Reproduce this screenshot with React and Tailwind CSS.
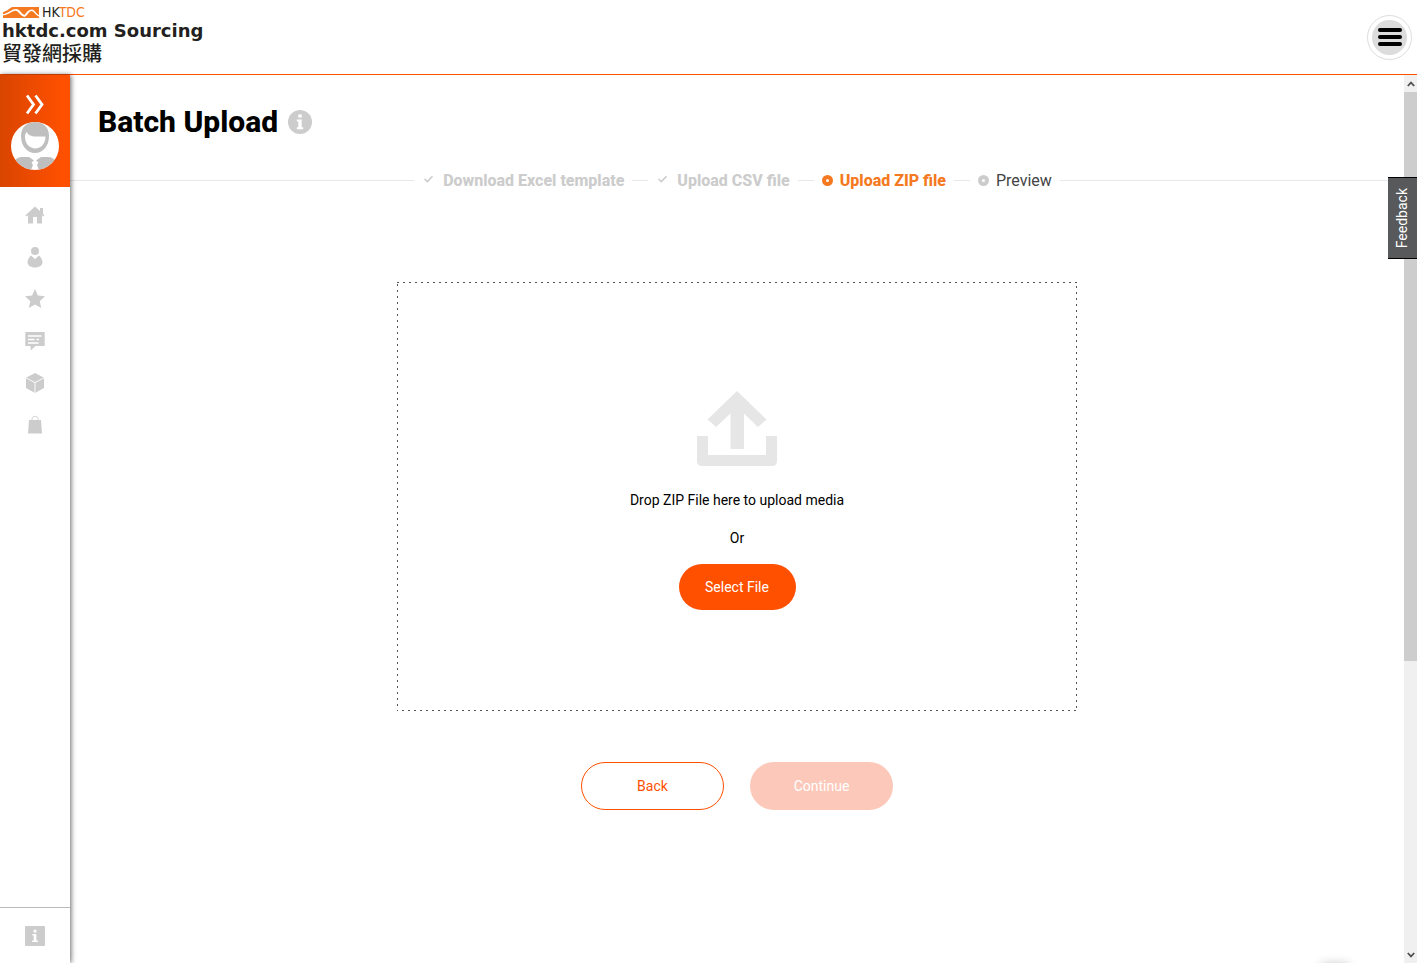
import clsx from 'clsx';

const navItems = [
    {
        label: 'Home',
        icon: (
            <path d="M10 1.5 0.5 10.2 1.6 11.4 3 10.3V18.5H8V12H12V18.5H17V10.3L18.4 11.4 19.5 10.2 18 8.8V3H15V6Z" />
        ),
    },
    {
        label: 'Profile',
        icon: (
            <>
                <circle cx="10" cy="4" r="4" />
                <path d="M6.2 8.6 10 12.2 13.8 8.6C16.3 10.5 17.7 13.5 17.5 16 16.8 19 13.5 20.5 10 20.5S3.2 19 2.5 16C2.3 13.5 3.7 10.5 6.2 8.6Z" />
            </>
        ),
    },
    {
        label: 'Favourites',
        icon: <path d="M10 0 12.9 6.6 20 7.3 14.7 12.2 16.2 19 10 15.5 3.8 19 5.3 12.2 0 7.3 7.1 6.6Z" />,
    },
    {
        label: 'Messages',
        icon: (
            <>
                <path d="M0.3 1H19.7V15H10.5L5.6 19.6V15H0.3Z" />
                <path d="M3 5H16.5M3 8.5H9.5M11.5 8.5H14M3 12H13.5" stroke="#fff" strokeWidth="1.4" />
            </>
        ),
    },
    {
        label: 'Products',
        icon: (
            <>
                <path d="M10 0 19 4.7V15L10 20 1 15V4.7Z" />
                <path d="M1.2 5 10 9.6 18.8 5M10 9.6V20" fill="none" stroke="#fff" strokeWidth="0.9" />
            </>
        ),
    },
    {
        label: 'Orders',
        icon: (
            <>
                <path d="M4 5H16L17 18.5H3Z" />
                <path d="M7 6V4C7 0.4 13 0.4 13 4V6" fill="none" stroke="#ccc" strokeWidth="0.9" />
            </>
        ),
    },
];

const steps = [
    { label: 'Download Excel template', state: 'done' },
    { label: 'Upload CSV file', state: 'done' },
    { label: 'Upload ZIP file', state: 'active' },
    { label: 'Preview', state: 'next' },
];

function Header() {
    return (
        <header className="flex shrink-0 items-center justify-between border-b border-[#ff5000] pr-[5px]">
            <a href="#" className="flex h-[74px] flex-col pt-1 pl-[2px] text-[#231f20]">
                <span className="flex h-4 items-center">
                    <svg viewBox="0 0 38 12" className="h-3 w-[38px]" aria-hidden="true">
                        <path d="M1 1H37V12H1Z" fill="#f47920" />
                        <path d="M0 0H12C8 1.5 6 5 0 6.5Z" fill="#fff" />
                        <path
                            d="M0 8.3C6 8 9 3.2 14 3 18 3.2 19 7.5 22.5 9 25 5.5 27 3.2 30 3.4 33 4 34 8 38 9.5V11C33.5 9.5 32 5.2 29.6 5 27 5.2 25.5 9.5 22.5 11 18 9.6 16.5 5 13.5 4.8 9.5 5 6 9.6 0 9.6Z"
                            fill="#fff"
                        />
                    </svg>
                    <span className="pl-[2px] font-['Liberation_Sans_Narrow','DejaVu_Sans_Condensed',sans-serif] text-[14px] leading-4">
                        HK<span className="text-[#f47920]">TDC</span>
                    </span>
                </span>
                <span className="font-['DejaVu_Sans',sans-serif] text-[18px] leading-[22px] font-bold">
                    hktdc.com Sourcing
                </span>
                <span className="font-['Noto_Sans_CJK_TC',sans-serif] text-[20px] leading-[22px] font-medium">
                    貿發網採購
                </span>
            </a>
            <button
                type="button"
                aria-label="Menu"
                className="flex size-[45px] items-center justify-center rounded-full border border-[#ddd]"
            >
                <span className="flex size-[35px] flex-col items-center justify-center gap-[3px] rounded-full bg-[#dcdcdc]">
                    <span className="h-1 w-6 rounded-full bg-black" />
                    <span className="h-1 w-6 rounded-full bg-black" />
                    <span className="h-1 w-6 rounded-full bg-black" />
                </span>
            </button>
        </header>
    );
}

function Sidebar() {
    return (
        <aside className="z-10 flex w-[70px] shrink-0 flex-col bg-white shadow-[1px_0_5px_rgba(0,0,0,0.6)]">
            <div className="flex flex-col items-center gap-[7px] bg-linear-to-r from-[#d94500] to-[#ff5000] to-90% pt-[19px] pb-[17px]">
                <button type="button" aria-label="Expand menu">
                    <svg viewBox="0 0 20 21" className="h-[21px] w-5" fill="none" stroke="#fff" strokeWidth="2.8">
                        <path d="M2 1.5 8.5 10.5 2 19.5M10.5 1.5 17 10.5 10.5 19.5" />
                    </svg>
                </button>
                <a href="#" aria-label="Account" className="size-12 overflow-hidden rounded-full bg-white">
                    <svg viewBox="0 0 48 48" className="size-12">
                        <path
                            d="M24 0C32 0 38 5 38 14 38 24 32 31 24 31S10 24 10 14C10 5 16 0 24 0Z"
                            fill="#bfbfbf"
                        />
                        <path
                            d="M15.5 10C17.5 13 20 14.5 25 14.5H34.5C34.5 21.5 30 26.5 24.5 26.5 18.5 26.5 14 21.5 14 15 14 13 14.6 11.5 15.5 10Z"
                            fill="#fff"
                        />
                        <path
                            d="M3 41C4 36 8 35 12 35H18L23 38.5 20.5 40.5 22 43 20 48H3ZM45 41C44 36 40 35 36 35H30L25 38.5 27.5 40.5 26 43 28 48H45Z"
                            fill="#bfbfbf"
                        />
                    </svg>
                </a>
            </div>
            <nav className="flex flex-1 flex-col pt-[7px]">
                {navItems.map((item) => (
                    <a
                        key={item.label}
                        href="#"
                        aria-label={item.label}
                        className="flex h-[42px] items-center justify-center"
                    >
                        <svg viewBox="0 0 20 20" className="size-5 overflow-visible" fill="#ccc">
                            {item.icon}
                        </svg>
                    </a>
                ))}
            </nav>
            <a href="#" aria-label="Help" className="flex h-14 items-center justify-center border-t border-[#bbb]">
                <svg viewBox="0 0 20 20" className="size-5">
                    <rect width="20" height="20" rx="1" fill="#ccc" />
                    <path d="M8.6 3.8H11.4V6.4H8.6ZM7.4 8H11.4V14.4H12.8V16H7.2V14.4H8.7V9.6H7.4Z" fill="#fff" />
                </svg>
            </a>
        </aside>
    );
}

function StepIcon({ state }) {
    if (state === 'done') {
        return (
            <svg viewBox="0 0 14 14" className="mr-[7px] w-[14px]" fill="none" stroke="#ccc" strokeWidth="1.6">
                <path d="M2.5 5 5.4 7.6 10.5 2.2" />
            </svg>
        );
    }
    return (
        <span
            className={clsx(
                'mr-[7px] size-[11px] rounded-full border-4',
                state === 'active' ? 'border-[#f47920]' : 'border-[#ccc]',
            )}
        />
    );
}

function Steps() {
    return (
        <ol className="mt-[26px] flex items-center text-[16px] leading-[25px] before:h-px before:flex-1 before:bg-[#e8e8e8] after:h-px after:flex-1 after:bg-[#e8e8e8]">
            {steps.map((step, index) => (
                <li key={step.label} className="flex items-center">
                    {index > 0 && <span className="h-px w-4 bg-[#e8e8e8]" />}
                    <span
                        className={clsx(
                            'flex items-center px-2',
                            step.state === 'done' && 'font-extrabold text-[#ccc]',
                            step.state === 'active' && 'font-extrabold text-[#f47920]',
                            step.state === 'next' && 'text-[#444]',
                        )}
                    >
                        <StepIcon state={step.state} />
                        {step.label}
                    </span>
                </li>
            ))}
        </ol>
    );
}

function DropZone() {
    return (
        <section className="relative mt-[89px] flex w-full max-w-[680px] flex-col items-center pt-[109px] pb-[101px] text-[14px] leading-5 text-black">
            <svg className="pointer-events-none absolute inset-0 size-full" aria-hidden="true">
                <rect width="100%" height="100%" fill="none" stroke="#555" strokeWidth="2" strokeDasharray="2 4" />
            </svg>
            <svg viewBox="0 0 80 75" className="h-[75px] w-20" fill="#e6e6e6" aria-hidden="true">
                <path d="M40 0 69.5 28.5 61 36 47 22.5V58H33.5V22.5L19 36 10.5 28.5Z" />
                <path d="M0 45H11V64H69V45H80V70Q80 75 75 75H5Q0 75 0 70Z" />
            </svg>
            <p className="mt-6">Drop ZIP File here to upload media</p>
            <p className="mt-[18px]">Or</p>
            <button type="button" className="mt-4 h-[46px] w-[117px] rounded-full bg-[#ff5000] text-white">
                Select File
            </button>
        </section>
    );
}

function Scrollbar() {
    return (
        <div className="flex w-[13px] shrink-0 flex-col bg-[#f0f0f0]" aria-hidden="true">
            <div className="flex h-[17px] items-center justify-center">
                <svg viewBox="0 0 8 6" className="h-[6px] w-2" fill="none" stroke="#505050" strokeWidth="1.8">
                    <path d="M0.8 5 4 1.6 7.2 5" />
                </svg>
            </div>
            <div className="flex-1">
                <div className="h-2/3 bg-[#cdcdcd]" />
            </div>
            <div className="flex h-[17px] items-center justify-center">
                <svg viewBox="0 0 8 6" className="h-[6px] w-2" fill="none" stroke="#505050" strokeWidth="1.8">
                    <path d="M0.8 1 4 4.4 7.2 1" />
                </svg>
            </div>
        </div>
    );
}

export default function App() {
    return (
        <div className="flex h-screen flex-col overflow-hidden bg-white font-[Roboto,sans-serif]">
            <Header />
            <div className="relative flex min-h-0 flex-1">
                <Sidebar />
                <main className="min-w-0 flex-1 overflow-hidden pt-[27px]">
                    <div className="flex items-center gap-[10px] pl-7">
                        <h1 className="text-[30px] leading-10 font-extrabold text-black">Batch Upload</h1>
                        <button type="button" aria-label="About batch upload">
                            <svg viewBox="0 0 24 24" className="size-6">
                                <circle cx="12" cy="12" r="12" fill="#ccc" />
                                <path
                                    d="M10.3 4.5H13.7V7.5H10.3ZM8.8 9.5H13.7V17.2H15.2V19.2H8.8V17.2H10.3V11.5H8.8Z"
                                    fill="#fff"
                                />
                            </svg>
                        </button>
                    </div>
                    <Steps />
                    <div className="flex flex-col items-center">
                        <DropZone />
                        <div className="mt-[51px] flex gap-[26px] text-[14px]">
                            <button
                                type="button"
                                className="h-12 w-[143px] rounded-full border border-[#ff5000] text-[#ff5000]"
                            >
                                Back
                            </button>
                            <button type="button" disabled className="h-12 w-[143px] rounded-full bg-[#fcc8ba] text-white">
                                Continue
                            </button>
                        </div>
                    </div>
                </main>
                <Scrollbar />
                <div className="absolute top-full right-[66px] h-4 w-8 rounded-full shadow-[0_0_10px_rgba(0,0,0,0.2)]" />
                <button
                    type="button"
                    className="absolute top-[102px] right-0 flex h-[82px] w-[29px] items-center justify-center border-y border-black bg-[#58595b] text-[14px] text-white"
                >
                    <span className="rotate-180 [writing-mode:vertical-rl]">Feedback</span>
                </button>
            </div>
        </div>
    );
}
